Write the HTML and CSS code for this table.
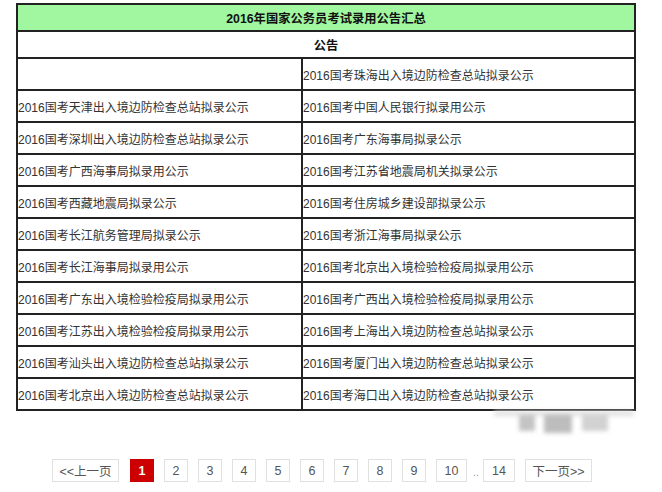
FILE: index.html
```html
<!DOCTYPE html>
<html lang="zh">
<head>
<meta charset="utf-8">
<title>2016年国家公务员考试录用公告汇总</title>
<link rel="stylesheet" href="styles.css">
</head>
<body>
<div class="page">
  <table class="list">
    <colgroup><col class="c-left"><col class="c-right"></colgroup>
    <tr class="row-title"><th colspan="2">2016年国家公务员考试录用公告汇总</th></tr>
    <tr class="row-sub"><th colspan="2">公告</th></tr>
    <tr><td></td><td>2016国考珠海出入境边防检查总站拟录公示</td></tr>
    <tr><td>2016国考天津出入境边防检查总站拟录公示</td><td>2016国考中国人民银行拟录用公示</td></tr>
    <tr><td>2016国考深圳出入境边防检查总站拟录公示</td><td>2016国考广东海事局拟录公示</td></tr>
    <tr><td>2016国考广西海事局拟录用公示</td><td>2016国考江苏省地震局机关拟录公示</td></tr>
    <tr><td>2016国考西藏地震局拟录公示</td><td>2016国考住房城乡建设部拟录公示</td></tr>
    <tr><td>2016国考长江航务管理局拟录公示</td><td>2016国考浙江海事局拟录公示</td></tr>
    <tr><td>2016国考长江海事局拟录用公示</td><td>2016国考北京出入境检验检疫局拟录用公示</td></tr>
    <tr><td>2016国考广东出入境检验检疫局拟录用公示</td><td>2016国考广西出入境检验检疫局拟录用公示</td></tr>
    <tr><td>2016国考江苏出入境检验检疫局拟录用公示</td><td>2016国考上海出入境边防检查总站拟录公示</td></tr>
    <tr><td>2016国考汕头出入境边防检查总站拟录公示</td><td>2016国考厦门出入境边防检查总站拟录公示</td></tr>
    <tr><td>2016国考北京出入境边防检查总站拟录公示</td><td>2016国考海口出入境边防检查总站拟录公示</td></tr>
  </table>

  <div class="pager">
    <a class="pg pg-wide">&lt;&lt;上一页</a>
    <span class="pg pg-cur">1</span>
    <a class="pg">2</a>
    <a class="pg">3</a>
    <a class="pg">4</a>
    <a class="pg">5</a>
    <a class="pg">6</a>
    <a class="pg">7</a>
    <a class="pg">8</a>
    <a class="pg">9</a>
    <a class="pg pg-two">10</a>
    <span class="dots">..</span>
    <a class="pg pg-two">14</a>
    <a class="pg pg-wide">下一页&gt;&gt;</a>
  </div>

  <div class="mark">
    <span class="m-strip"></span>
    <span class="m-b1"></span>
    <span class="m-b2"></span>
    <span class="m-b3"></span>
  </div>
</div>
</body>
</html>
```

FILE: styles.css
```css
html, body {
  margin: 0;
  padding: 0;
  background: #fff;
}

body {
  font-family: "Liberation Sans", Arial, "Noto Sans CJK SC", sans-serif;
  color: #333;
}

.page {
  position: relative;
  width: 662px;
  height: 492px;
  padding: 3px 0 0 16px;
  box-sizing: border-box;
}

.list {
  width: 618px;
  border: 1px solid #222;
  border-spacing: 0;
  border-collapse: separate;
  table-layout: fixed;
}

.c-left { width: 285px; }
.c-right { width: 333px; }

.list th,
.list td {
  border: 1px solid #222;
  padding: 0;
}

.list th {
  font-size: 12.3px;
  font-weight: bold;
  color: #111;
  text-align: center;
  height: 25px;
}

.row-title th {
  background: #a0f7a0;
}

.list td {
  height: 30px;
  font-size: 12px;
  color: #333;
  text-align: left;
  white-space: nowrap;
}

.pager {
  display: flex;
  align-items: center;
  margin: 48px 0 0 36px;
  height: 23px;
}

.pg {
  display: flex;
  align-items: center;
  justify-content: center;
  box-sizing: border-box;
  width: 24px;
  height: 23px;
  border: 1px solid #e0e0e0;
  margin-right: 10px;
  font-size: 12.5px;
  color: #555;
  text-decoration: none;
}

.pg-wide {
  width: 67px;
  margin-right: 11px;
}

.pg-two {
  width: 31px;
}

.pg-cur {
  background: #cc0000;
  border-color: #cc0000;
  color: #fff;
  font-weight: bold;
}

.dots {
  font-size: 11px;
  color: #999;
  width: 14px;
  margin-left: -8px;
  text-align: center;
  align-self: flex-end;
  padding-bottom: 4px;
}

.pg-two + .dots + .pg-two {
  width: 32px;
}

.mark {
  position: absolute;
  left: 494px;
  top: 410px;
  width: 140px;
  height: 34px;
  filter: blur(2px);
  pointer-events: none;
}

.mark span {
  position: absolute;
  display: block;
}

.m-strip {
  left: 0;
  top: 1px;
  width: 140px;
  height: 5px;
  background: #e2e2e2;
}

.m-b1 {
  left: 25px;
  top: 5px;
  width: 16px;
  height: 16px;
  background: #c4c4c4;
}

.m-b2 {
  left: 50px;
  top: 5px;
  width: 28px;
  height: 18px;
  background: #bdbdbd;
}

.m-b3 {
  left: 88px;
  top: 5px;
  width: 26px;
  height: 16px;
  background: #d2d2d2;
}
```
